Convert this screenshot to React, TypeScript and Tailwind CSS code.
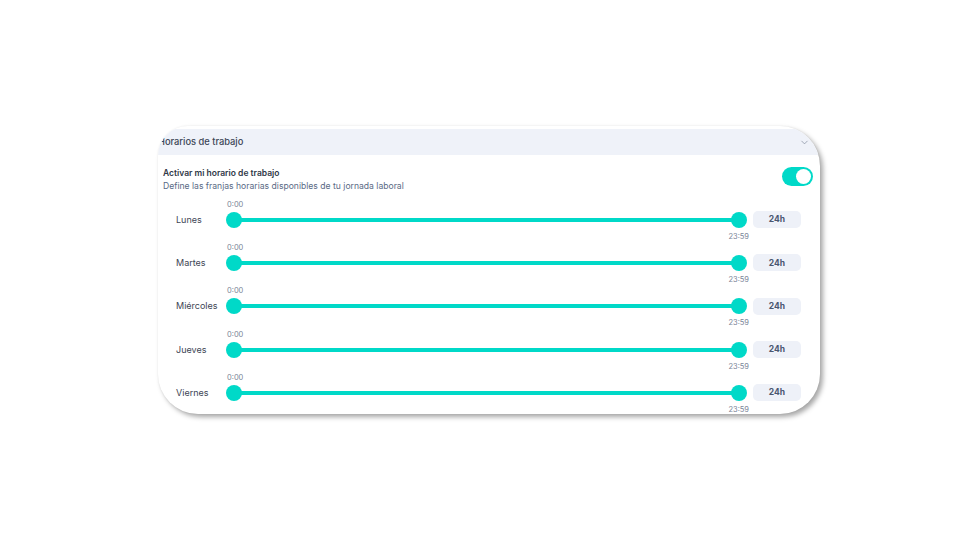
import { ChevronDown } from "lucide-react";

const TEAL = "#00d9c8";

const DAYS = ["Lunes", "Martes", "Miércoles", "Jueves", "Viernes"];

function DayRow({ day }: { day: string }) {
  return (
    <div className="flex h-[43.3px] items-center">
      <div className="w-[50px] text-[9px] text-[#3d4554]">{day}</div>
      <div className="relative h-[16px] flex-1">
        <span className="absolute -top-[12px] left-[1px] text-[7.5px] leading-[10px] text-[#7b8598]">0:00</span>
        <div className="absolute left-[8px] right-[8px] top-[6px] h-[4px] rounded-full bg-[#00d9c8]" />
        <div className="absolute left-0 top-0 h-[16px] w-[16px] rounded-full bg-[#00d9c8]" />
        <div className="absolute right-0 top-0 h-[16px] w-[16px] rounded-full bg-[#00d9c8]" />
        <span className="absolute -bottom-[14px] right-[-2px] text-[7.5px] leading-[10px] text-[#7b8598]">23:59</span>
      </div>
      <div className="ml-[6px] flex h-[17px] w-[48px] items-center justify-center rounded-[5px] bg-[#eef1f8] text-[8.5px] font-bold text-[#4a5670]">
        24h
      </div>
    </div>
  );
}

export default function App() {
  return (
    <div
      className="h-[540px] w-[960px] bg-white pl-[158px] pt-[126px]"
      style={{ fontFamily: "Inter, 'Noto Sans', sans-serif" }}
    >
      <div className="h-[288px] w-[662px] overflow-hidden rounded-[40px] rounded-tl-[30px] bg-white pt-[3px] shadow-[3px_3px_5px_rgba(0,0,0,0.35),0_0_2px_rgba(0,0,0,0.06)]">
        <div className="flex h-[26px] items-center justify-between bg-[#eff2f9] pl-0 pr-[10px]">
          <span className="text-[9.3px] font-medium text-[#3b4556]">Horarios de trabajo</span>
          <ChevronDown size={11} strokeWidth={1.5} color="#7d889b" />
        </div>
        <div className="pl-[5px] pr-[7px] pt-[12px]">
          <div className="flex items-start justify-between">
            <div>
              <div className="text-[8.5px] font-semibold leading-[13px] text-[#2f3847]">Activar mi horario de trabajo</div>
              <div className="text-[8.6px] leading-[13px] text-[#5a6a85]">Define las franjas horarias disponibles de tu jornada laboral</div>
            </div>
            <div className="flex h-[19px] w-[31px] items-center justify-end rounded-full pr-[2px]" style={{ backgroundColor: TEAL }}>
              <div className="h-[15px] w-[15px] rounded-full bg-white" />
            </div>
          </div>
          <div className="mt-[5px] pl-[13px] pr-[12px]">
            {DAYS.map((d) => (
              <DayRow key={d} day={d} />
            ))}
          </div>
        </div>
      </div>
    </div>
  );
}
